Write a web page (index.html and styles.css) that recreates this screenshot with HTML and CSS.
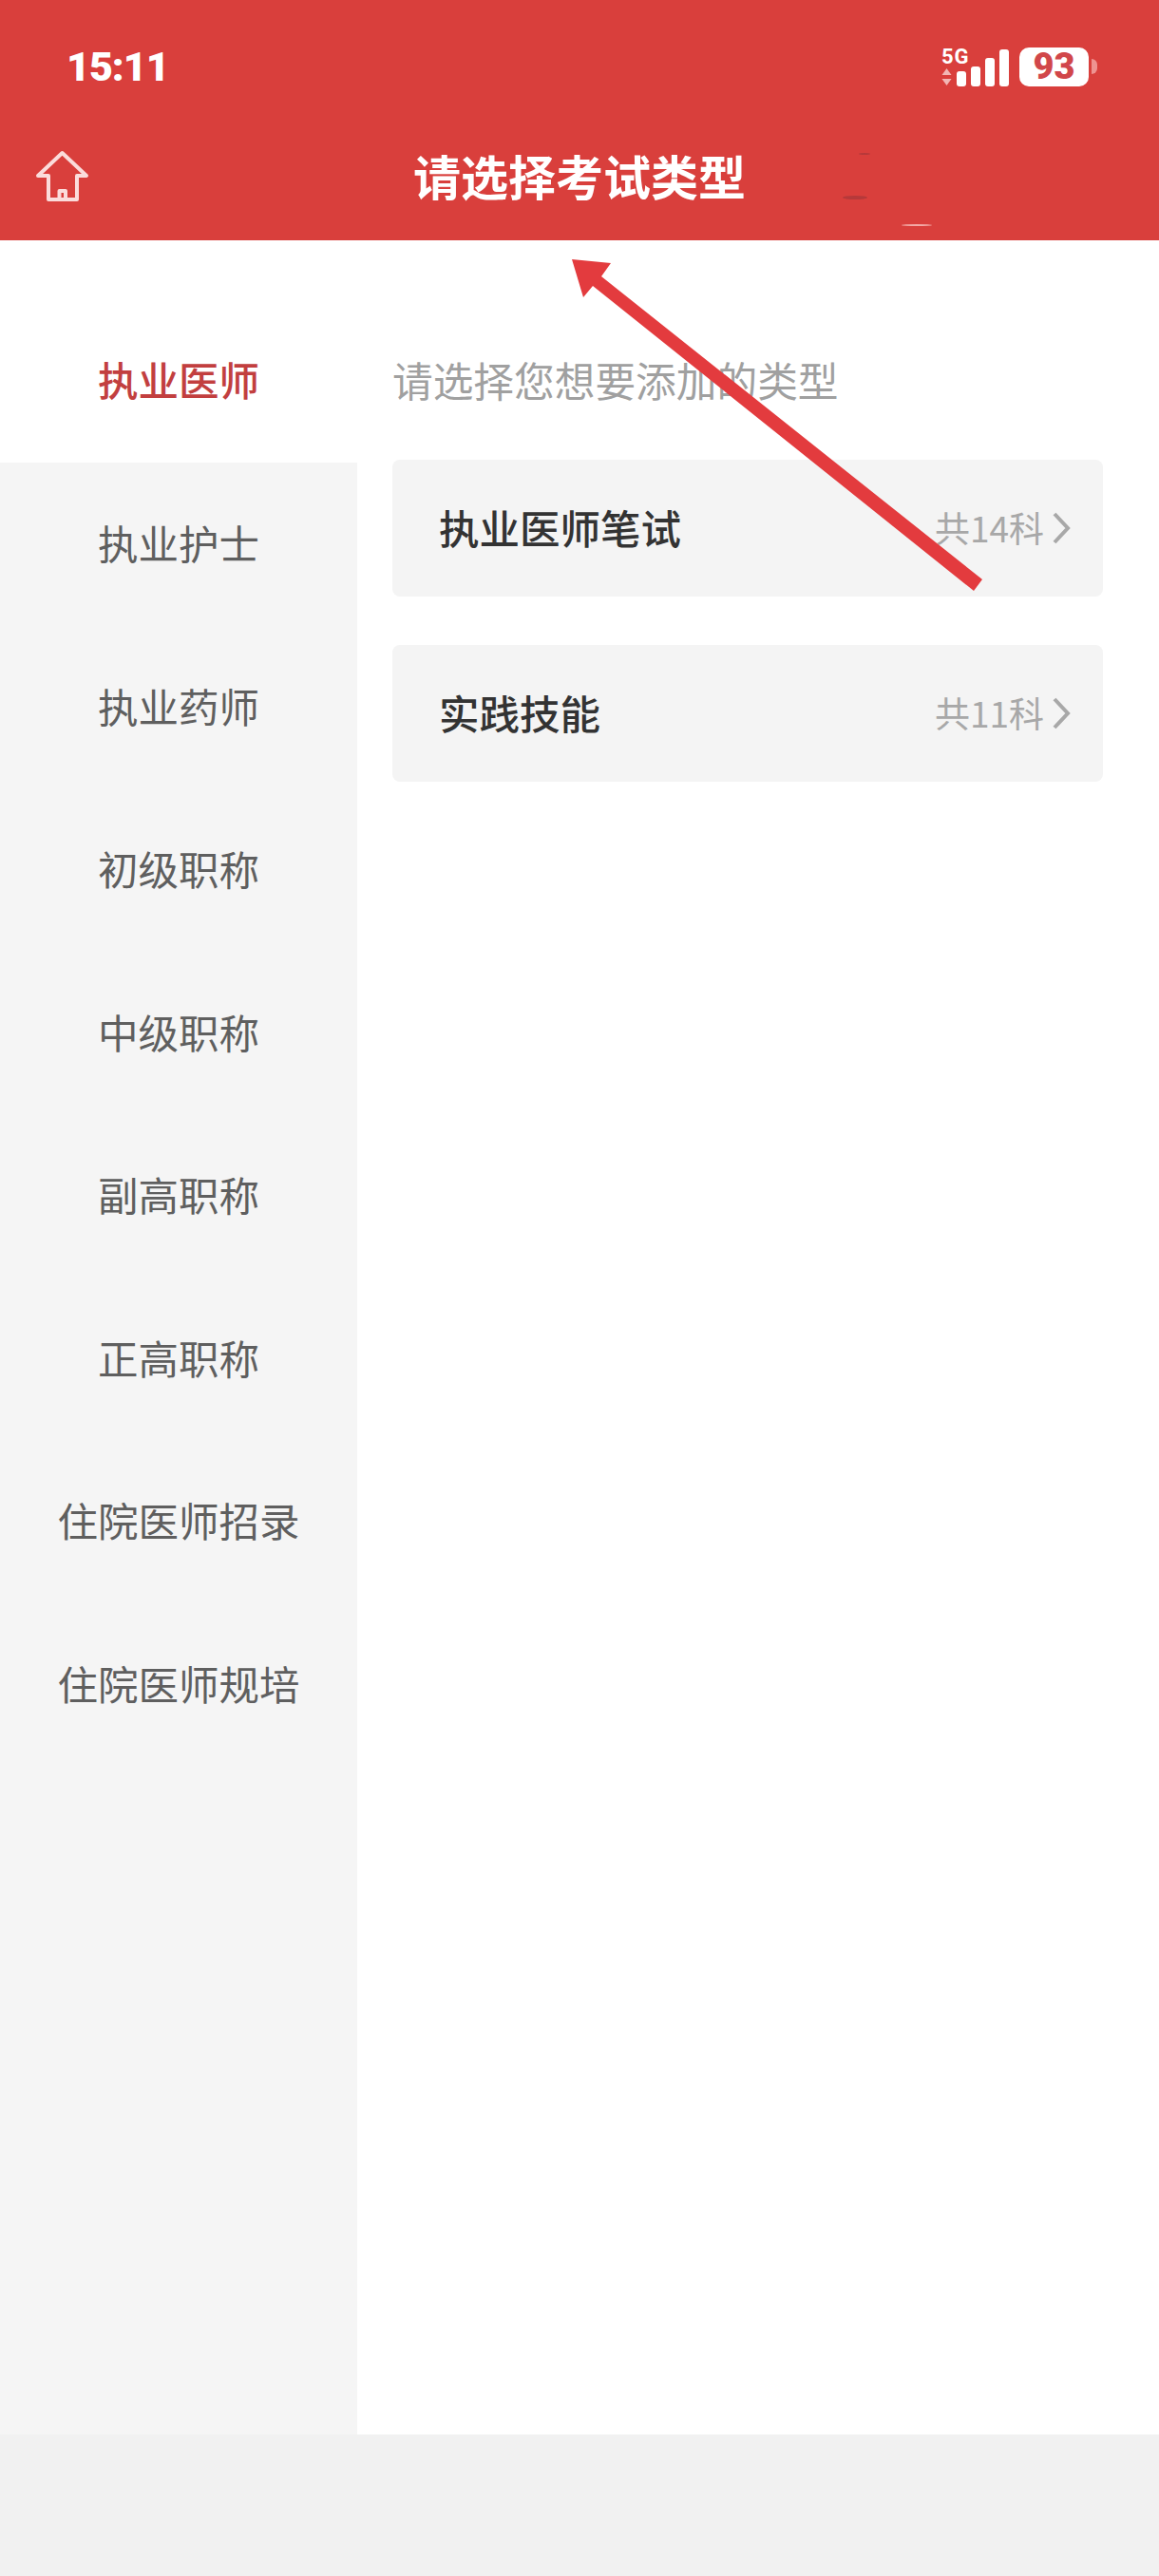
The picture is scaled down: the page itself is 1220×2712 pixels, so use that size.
FILE: index.html
```html
<!DOCTYPE html>
<html lang="zh-CN">

<head>
    <meta charset="UTF-8">
    <meta name="viewport" content="width=device-width, initial-scale=1.0">
    <title>请选择考试类型</title>
    <link rel="stylesheet" href="styles.css">
</head>

<body>

    <header class="top">
        <div class="status">
            <span class="time">15:11</span>
            <div class="status-right">
                <div class="net">
                    <span class="net-label">5G</span>
                    <svg class="net-arrows" width="11" height="18" viewBox="0 0 11 18">
                        <path d="M5.5 0 10.5 7H.5z" />
                        <path d="M.5 11h10l-5 7z" />
                    </svg>
                </div>
                <div class="bars">
                    <i class="bar bar-1"></i>
                    <i class="bar bar-2"></i>
                    <i class="bar bar-3"></i>
                    <i class="bar bar-4"></i>
                </div>
                <div class="battery">93</div>
                <i class="battery-nub"></i>
            </div>
        </div>
        <div class="nav">
            <svg class="home" width="56" height="56" viewBox="0 0 56 56">
                <path d="M13 27H2L27.5 3 53 27H43V52H13Z" />
                <path d="M24.5 52V43H31V52" />
            </svg>
            <h1 class="nav-title">请选择考试类型</h1>
        </div>
    </header>

    <main class="content">
        <!-- left: exam groups -->
        <ul class="side">
            <li class="side-item active">执业医师</li>
            <li class="side-item">执业护士</li>
            <li class="side-item">执业药师</li>
            <li class="side-item">初级职称</li>
            <li class="side-item">中级职称</li>
            <li class="side-item">副高职称</li>
            <li class="side-item">正高职称</li>
            <li class="side-item">住院医师招录</li>
            <li class="side-item">住院医师规培</li>
        </ul>

        <section class="types">
            <p class="hint">请选择您想要添加的类型</p>
            <div class="card">
                <span class="card-name">执业医师笔试</span>
                <span class="card-count">共14科</span>
                <svg class="chev" width="20" height="34" viewBox="0 0 20 34">
                    <path d="M3 2 17 17 3 32" />
                </svg>
            </div>
            <div class="card">
                <span class="card-name">实践技能</span>
                <span class="card-count">共11科</span>
                <svg class="chev" width="20" height="34" viewBox="0 0 20 34">
                    <path d="M3 2 17 17 3 32" />
                </svg>
            </div>
        </section>
    </main>

    <footer class="bottom"></footer>

    <!-- annotation and retouch marks lying over the screenshot -->
    <svg class="arrow" width="1220" height="700" viewBox="0 0 1220 700">
        <ellipse class="smudge-dark" cx="900" cy="208" rx="13" ry="2" />
        <ellipse class="smudge-dark" cx="910" cy="162" rx="6" ry="1" />
        <ellipse class="smudge-light" cx="965" cy="237" rx="16" ry="1" />
        <polygon points="602,273 643,277 633,291 1034,610 1025,622 624,301 614,313" />
    </svg>

</body>

</html>
```

FILE: styles.css
```css
* {
    box-sizing: border-box;
}

html,
body {
    margin: 0;
    padding: 0;
}

body {
    position: relative;
    width: 1220px;
    height: 2712px;
    overflow: hidden;
    display: flex;
    flex-direction: column;
    background-color: #f1f1f1;
    font-family: "Noto Sans CJK SC", "Noto Sans", sans-serif;
}

.top {
    height: 253px;
    background-color: #d93f3c;
    color: #fff;
}

.status {
    height: 140px;
    display: flex;
    justify-content: space-between;
    padding: 50px 65px 0 70px;
}

.time {
    font-family: Roboto, sans-serif;
    font-size: 43px;
    font-weight: 900;
    line-height: 40px;
    letter-spacing: -1px;
}

.status-right {
    display: flex;
    align-items: flex-start;
    height: 41px;
}

.net {
    width: 32px;
    margin-right: -16px;
    margin-top: 1px;
}

.net-label {
    display: block;
    font-family: Roboto, sans-serif;
    font-size: 22px;
    font-weight: 700;
    line-height: 18px;
    letter-spacing: 1px;
}

.net-arrows {
    display: block;
    margin-top: 3px;
    fill: #f2b6b4;
}

.bars {
    display: flex;
    align-items: flex-end;
    gap: 5px;
    height: 39px;
    margin-top: 2px;
    margin-right: 11px;
}

.bar {
    display: block;
    width: 10px;
    background-color: #fff;
    border-radius: 3px;
}

.bar-1 {
    height: 16px;
}

.bar-2 {
    height: 21px;
}

.bar-3 {
    height: 30px;
}

.bar-4 {
    height: 39px;
}

.battery {
    width: 73px;
    height: 41px;
    background-color: #fff;
    border-radius: 10px;
    color: #d1474a;
    font-family: Roboto, sans-serif;
    font-size: 38px;
    font-weight: 900;
    line-height: 41px;
    text-align: center;
}

.battery-nub {
    display: block;
    width: 6px;
    height: 16px;
    margin: 12px 0 0 3px;
    background-color: #ee9391;
    border-radius: 0 8px 8px 0;
}

.nav {
    position: relative;
    height: 113px;
    display: flex;
    justify-content: center;
    padding-top: 12px;
}

.home {
    position: absolute;
    left: 38px;
    top: 18px;
    fill: none;
    stroke: #fbdcdb;
    stroke-width: 4;
    stroke-linejoin: round;
}

.nav-title {
    margin: 0;
    font-size: 50px;
    font-weight: 700;
    line-height: 64px;
}

.content {
    flex: 1;
    display: flex;
    background-color: #fff;
}

.side {
    width: 376px;
    margin: 0;
    padding: 0;
    list-style: none;
    background-color: #f5f5f5;
}

.side-item {
    height: 171.5px;
    font-size: 42.5px;
    line-height: 168px;
    text-align: center;
    color: #5f5f5f;
}

.side-item.active {
    height: 234px;
    padding-top: 62px;
    background-color: #fff;
    color: #c23f3f;
    font-weight: 500;
}

.types {
    flex: 1;
    padding: 118px 59px 0 37px;
}

.hint {
    margin: 0 0 56px;
    font-size: 42.7px;
    line-height: 57px;
    color: #a0a0a0;
}

.card {
    height: 144px;
    display: flex;
    align-items: center;
    margin-bottom: 51px;
    padding: 0 34px 0 49px;
    background-color: #f4f4f4;
    border-radius: 8px;
}

.card-name {
    flex: 1;
    margin-bottom: 4px;
    font-size: 42.5px;
    font-weight: 500;
    color: #333;
}

.card-count {
    margin-bottom: 2px;
    font-size: 37px;
    color: #a8a8a8;
}

.chev {
    margin-left: 8px;
    fill: none;
    stroke: #a8a8a8;
    stroke-width: 4;
}

.bottom {
    height: 149px;
    background-color: #f1f1f1;
}

.arrow {
    position: absolute;
    left: 0;
    top: 0;
    fill: #e33b3e;
    pointer-events: none;
}

.smudge-dark {
    fill: #b5393a;
}

.smudge-light {
    fill: #f3a9a6;
}
```
